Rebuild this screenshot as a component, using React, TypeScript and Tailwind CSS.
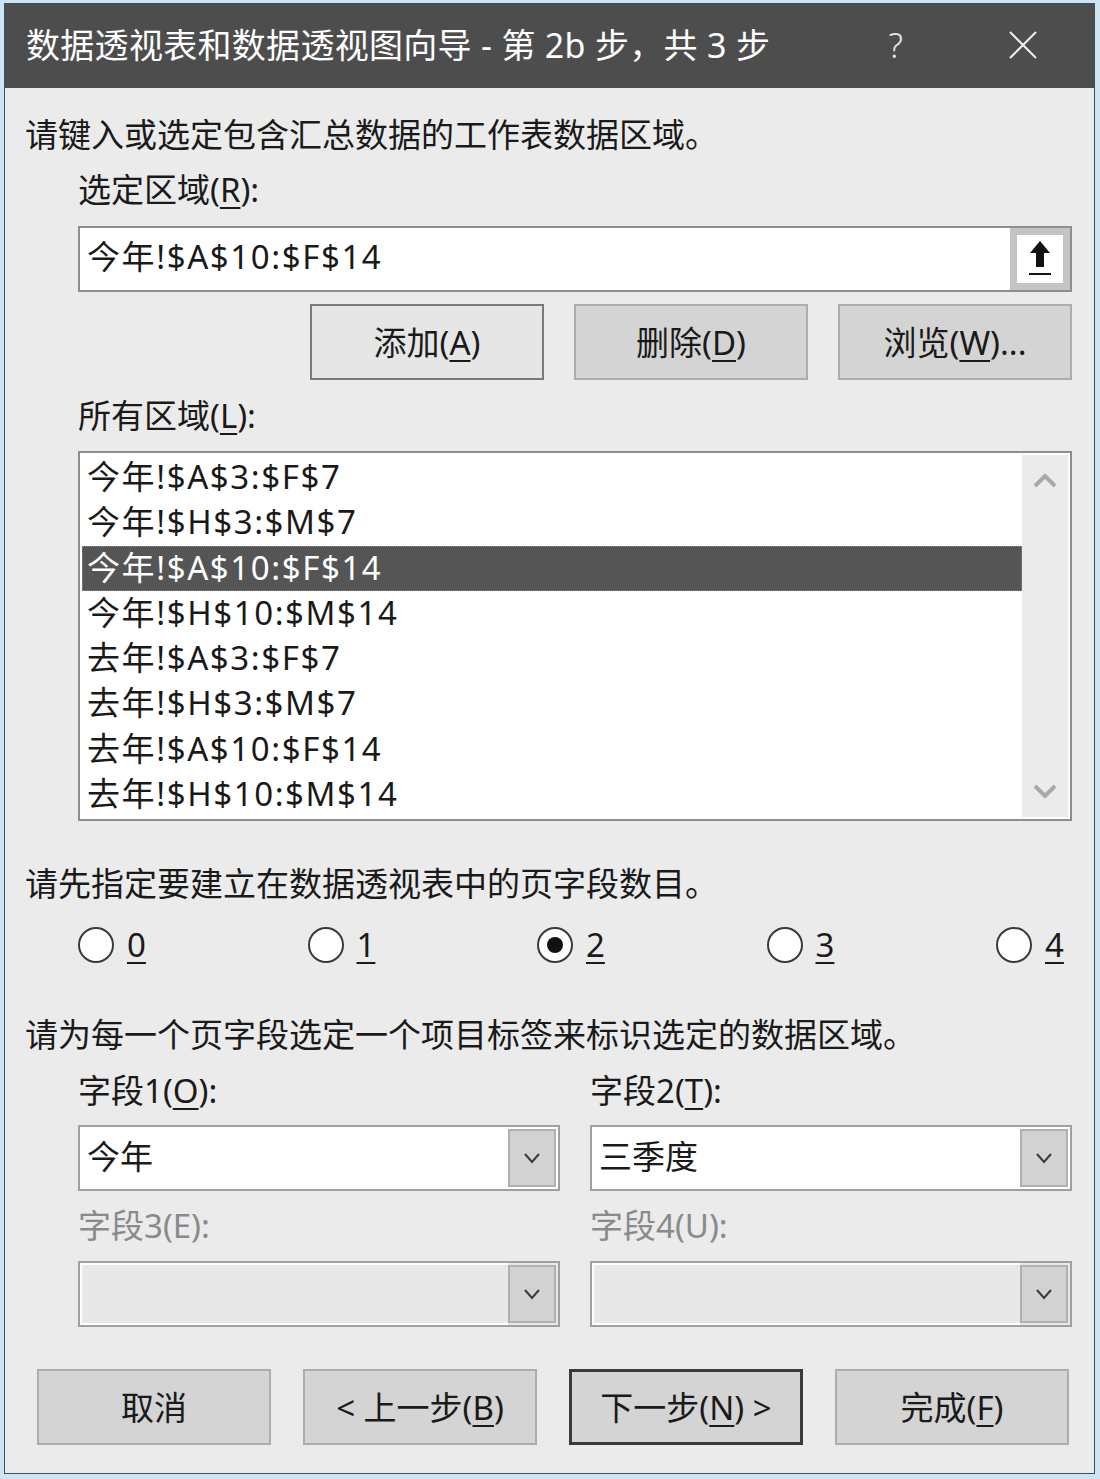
import React from "react";

const FONT = { fontFamily: '"Noto Sans", "Noto Sans CJK SC", sans-serif' };

function U({ children }: { children: React.ReactNode }) {
  return <span className="underline decoration-[2px] underline-offset-[5px]">{children}</span>;
}

function Btn({
  children,
  variant = "normal",
}: {
  children: React.ReactNode;
  variant?: "normal" | "light" | "default";
}) {
  const cls =
    variant === "light"
      ? "border-2 border-[#7a7a7a] bg-[#e6e6e6]"
      : variant === "default"
      ? "border-[3px] border-[#3a3a3a] bg-[#d4d4d4]"
      : "border-2 border-[#adadad] bg-[#d4d4d4]";
  return (
    <div className={`w-[234px] h-[76px] flex items-center justify-center text-[33px] leading-none text-[#1a1a1a] ${cls}`}>
      {children}
    </div>
  );
}

function Chevron() {
  return (
    <svg width="18" height="12" viewBox="0 0 18 12">
      <path d="M2 2 L9 10 L16 2" fill="none" stroke="#3a3a3a" strokeWidth="2" />
    </svg>
  );
}

function Combo({ value, disabled }: { value?: string; disabled?: boolean }) {
  return (
    <div
      className={`w-[482px] h-[66px] border-2 border-[#a0a0a0] flex ${
        disabled ? "bg-[#e8e8e8]" : "bg-white"
      }`}
    >
      <div className={`flex-1 flex items-center pl-[7px] pb-[3px] text-[33px] text-[#1a1a1a] ${disabled ? "border-2 border-white border-r-0" : ""}`}>
        {value}
      </div>
      <div className="w-[48px] my-[2px] mr-[2px] bg-[#d2d2d2] border-2 border-[#b0b0b0] flex items-center justify-center">
        <Chevron />
      </div>
    </div>
  );
}

function Radio({ label, checked }: { label: string; checked?: boolean }) {
  return (
    <div className="flex items-center gap-[13px]">
      <div className="w-[36px] h-[36px] rounded-full border-2 border-[#3a3a3a] bg-white flex items-center justify-center">
        {checked && <div className="w-[16px] h-[16px] rounded-full bg-[#111]" />}
      </div>
      <span className="text-[33px] leading-none text-[#1a1a1a]">
        <U>{label}</U>
      </span>
    </div>
  );
}

const items = [
  "今年!$A$3:$F$7",
  "今年!$H$3:$M$7",
  "今年!$A$10:$F$14",
  "今年!$H$10:$M$14",
  "去年!$A$3:$F$7",
  "去年!$H$3:$M$7",
  "去年!$A$10:$F$14",
  "去年!$H$10:$M$14",
];

export default function App() {
  return (
    <div className="w-[1100px] h-[1479px] bg-[#c8e6f6] pt-[3px] pl-[4px] pr-[5px] pb-[5px]" style={FONT}>
      <div className="w-full h-full border border-[#4a4a4a] flex flex-col">
        {/* Title bar */}
        <div className="h-[84px] bg-[#4d4d4d] flex items-center pl-[21px] pb-[2px] text-white shrink-0">
          <span className="text-[34px] leading-none tracking-[0.3px]">数据透视表和数据透视图向导 - 第 2b 步，共 3 步</span>
          <span className="ml-auto mr-[105px] text-[34px] font-light leading-none text-[#e8e8e8]">?</span>
          <svg width="30" height="30" viewBox="0 0 30 30" className="mr-[56px]">
            <path d="M2 2 L28 28 M28 2 L2 28" stroke="#f0f0f0" strokeWidth="2" />
          </svg>
        </div>

        {/* Body */}
        <div className="flex-1 bg-[#ebebeb] pl-[20px] text-[#1a1a1a] flex flex-col">
          <div className="mt-[24px] h-[45px] leading-[45px] text-[33px]">请键入或选定包含汇总数据的工作表数据区域。</div>
          <div className="pl-[53px] w-[1047px] flex flex-col">
            <div className="mt-[10px] h-[45px] leading-[45px] text-[33px]">
              选定区域(<U>R</U>):
            </div>
            {/* Input */}
            <div className="mt-[14px] h-[66px] border-2 border-[#8e8e8e] bg-white flex">
              <div className="flex-1 flex items-center pl-[7px] pb-[4px] text-[33px] tracking-[1.6px]">今年!$A$10:$F$14</div>
              <div className="w-[60px] bg-[#c4c4c4] p-[7px]">
                <div className="w-full h-full bg-white flex items-center justify-center">
                  <svg width="26" height="40" viewBox="0 0 26 40">
                    <path d="M13 2 L23 14 L17 14 L17 28 L9 28 L9 14 L3 14 Z" fill="#111" />
                    <rect x="2" y="34" width="22" height="2" fill="#111" />
                  </svg>
                </div>
              </div>
            </div>
            {/* Buttons */}
            <div className="mt-[12px] flex justify-end gap-[30px]">
              <Btn variant="light">
                添加(<U>A</U>)
              </Btn>
              <Btn>
                删除(<U>D</U>)
              </Btn>
              <Btn>
                浏览(<U>W</U>)...
              </Btn>
            </div>
            <div className="mt-[13px] h-[45px] leading-[45px] text-[33px]">
              所有区域(<U>L</U>):
            </div>
            {/* Listbox */}
            <div className="mt-[13px] h-[370px] border-2 border-[#8e8e8e] bg-white flex p-[2px]">
              <div className="flex-1 flex flex-col">
                {items.map((t, i) => (
                  <div
                    key={i}
                    className={`h-[45.3px] leading-[43px] text-[33px] pl-[5px] tracking-[1.6px] ${
                      i === 2 ? "bg-[#555555] text-white outline-1 outline-dotted outline-[#888] -outline-offset-1" : ""
                    }`}
                  >
                    {t}
                  </div>
                ))}
              </div>
              <div className="w-[46px] bg-[#ebebeb] flex flex-col items-center justify-between py-[18px]">
                <svg width="24" height="16" viewBox="0 0 24 16">
                  <path d="M2 13 L12 3 L22 13" fill="none" stroke="#a8a8a8" strokeWidth="4" />
                </svg>
                <svg width="24" height="16" viewBox="0 0 24 16">
                  <path d="M2 3 L12 13 L22 3" fill="none" stroke="#a8a8a8" strokeWidth="4" />
                </svg>
              </div>
            </div>
          </div>

          <div className="mt-[40px] h-[45px] leading-[45px] text-[33px]">请先指定要建立在数据透视表中的页字段数目。</div>
          <div className="mt-[16px] h-[45px] pl-[53px] flex items-center">
            <div className="w-[229.5px] shrink-0"><Radio label="0" /></div>
            <div className="w-[229.5px] shrink-0"><Radio label="1" /></div>
            <div className="w-[229.5px] shrink-0"><Radio label="2" checked /></div>
            <div className="w-[229.5px] shrink-0"><Radio label="3" /></div>
            <div className="shrink-0"><Radio label="4" /></div>
          </div>

          <div className="mt-[45px] h-[45px] leading-[45px] text-[33px]">请为每一个页字段选定一个项目标签来标识选定的数据区域。</div>
          <div className="pl-[53px] grid grid-cols-[482px_482px] gap-x-[30px]">
            <div className="mt-[11px] h-[45px] leading-[45px] text-[33px]">
              字段1(<U>O</U>):
            </div>
            <div className="mt-[11px] h-[45px] leading-[45px] text-[33px]">
              字段2(<U>T</U>):
            </div>
            <div className="mt-[12px]"><Combo value="今年" /></div>
            <div className="mt-[12px]"><Combo value="三季度" /></div>
            <div className="mt-[12px] h-[45px] leading-[45px] text-[33px] text-[#8a8a8a]">字段3(E):</div>
            <div className="mt-[12px] h-[45px] leading-[45px] text-[33px] text-[#8a8a8a]">字段4(U):</div>
            <div className="mt-[13px]"><Combo disabled /></div>
            <div className="mt-[13px]"><Combo disabled /></div>
          </div>

          <div className="mt-[42px] pl-[12px] flex gap-[32px]">
            <Btn>取消</Btn>
            <Btn>
              &lt; 上一步(<U>B</U>)
            </Btn>
            <Btn variant="default">
              下一步(<U>N</U>) &gt;
            </Btn>
            <Btn>
              完成(<U>F</U>)
            </Btn>
          </div>
        </div>
      </div>
    </div>
  );
}
